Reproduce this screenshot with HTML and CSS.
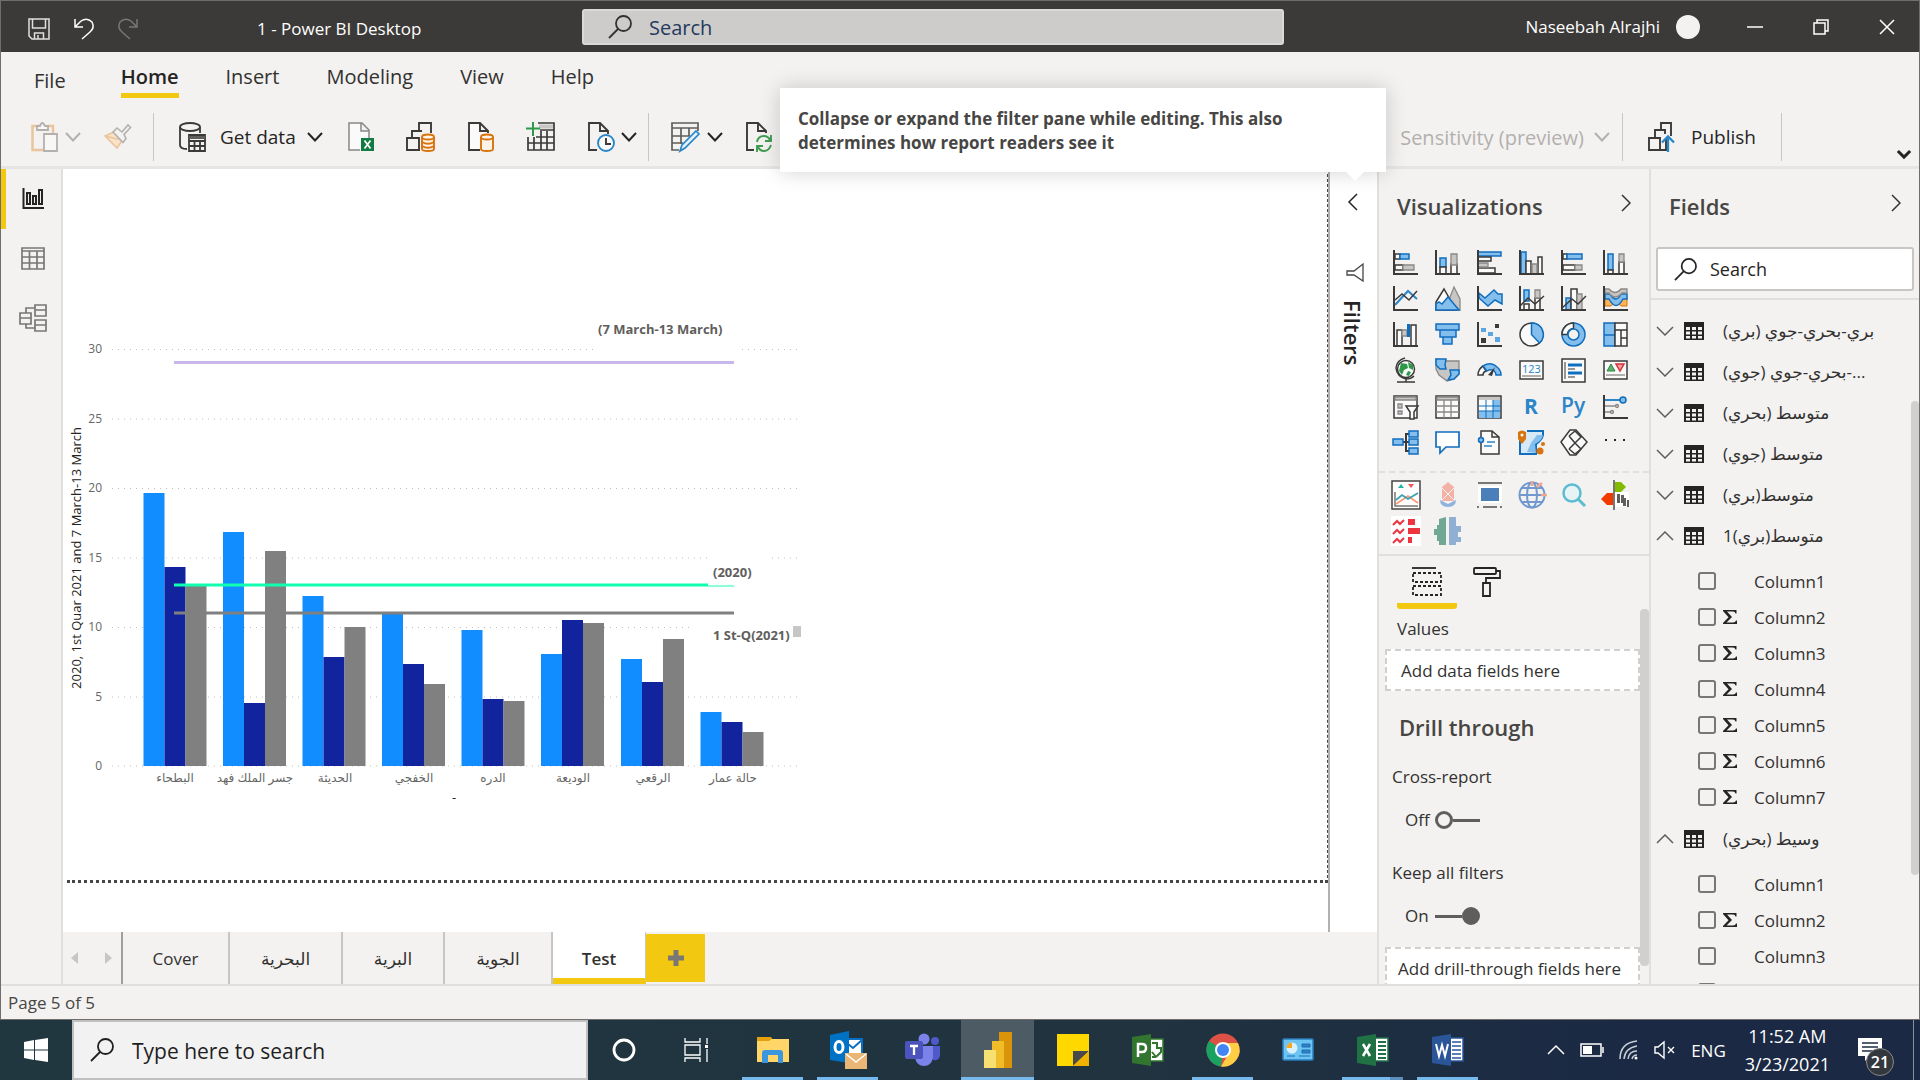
FILE: index.html
```
<!DOCTYPE html>
<html lang="en">
<head>
<meta charset="utf-8">
<title>1 - Power BI Desktop</title>
<link rel="stylesheet" href="styles.css">
</head>
<body>
<svg class="defs" aria-hidden="true">
  <symbol id="down" viewBox="0 0 16 10"><path d="M1 1l7 7.500 7-7.500" fill="none" stroke="currentColor" stroke-width="2"/></symbol>
  <symbol id="right" viewBox="0 0 10 18"><path d="M1 1l8 8-8 8" fill="none" stroke="currentColor" stroke-width="1.500"/></symbol>
  <symbol id="caret" viewBox="0 0 18 10"><path d="M1 1l8 8 8-8" fill="none" stroke="currentColor" stroke-width="1.500"/></symbol>
  <symbol id="lens" viewBox="0 0 24 24"><circle cx="15.500" cy="8.500" r="7.500" fill="none" stroke="currentColor" stroke-width="1.800"/><path d="M10 14L1 23" stroke="currentColor" stroke-width="1.800"/></symbol>
  <symbol id="table" viewBox="0 0 20 18"><path d="M0 0h20v18H0z" fill="#252423"/><path d="M2 5h4v3H2zM8 5h4v3H8zM14 5h4v3h-4zM2 9.500h4v3H2zM8 9.500h4v3H8zM14 9.500h4v3h-4zM2 14h4v2.500H2zM8 14h4v2.500H8zM14 14h4v2.500h-4z" fill="#f3f2f1"/></symbol>
  <symbol id="sigma" viewBox="0 0 14 14"><path d="M0 0h13.500v3.500h-1Q12 1.500 10 1.500H4L9 7l-5.500 5.500H10q2.500 0 3-2h1V14H0v-1l5.500-5.700L0 1z" fill="#252423"/></symbol>
</svg>

<div class="window">
  <header class="titlebar">
    <div class="titlebar-left">
      <button class="plain" aria-label="Save"><svg width="22" height="22" viewBox="0 0 22 22" fill="none" stroke="#e1dfdd" stroke-width="1.500"><path d="M1 1h20v20H4l-3-3zM4.500 1v9h13V1M6.500 21v-6h9v6M10 21v-4"/></svg></button>
      <button class="plain" aria-label="Undo"><svg width="20" height="22" viewBox="0 0 20 22" fill="none" stroke="#fff" stroke-width="1.500"><path d="M1 1v8h8M1 9L7 3q6-4 11 1 3 6-2 10l-8 7"/></svg></button>
      <button class="plain" aria-label="Redo"><svg width="20" height="22" viewBox="0 0 20 22" fill="none" stroke="#797775" stroke-width="1.500"><path d="M19 1v8h-8M19 9L13 3Q7-1 2 4q-3 6 2 10l8 7"/></svg></button>
      <span class="doc-title">1 - Power BI Desktop</span>
    </div>
    <label class="title-search"><svg width="24" height="24"><use href="#lens"/></svg><input type="text" placeholder="Search" aria-label="Search"></label>
    <div class="titlebar-right">
      <span>Naseebah Alrajhi</span><span class="avatar"></span>
      <button class="plain" aria-label="Minimize"><svg width="16" height="16"><path d="M0 8h16" stroke="#fff" stroke-width="1.500"/></svg></button>
      <button class="plain" aria-label="Restore"><svg width="16" height="16" fill="none" stroke="#fff" stroke-width="1.500"><path d="M1 4h11v11H1zM4 4V1h11v11h-3"/></svg></button>
      <button class="plain" aria-label="Close"><svg width="16" height="16" stroke="#fff" stroke-width="1.500"><path d="M1 1l14 14M15 1L1 15"/></svg></button>
    </div>
  </header>

  <nav class="tabs">
    <button class="tab-file">File</button>
    <button class="tab active">Home</button>
    <button class="tab">Insert</button>
    <button class="tab">Modeling</button>
    <button class="tab">View</button>
    <button class="tab">Help</button>
  </nav>

  <div class="ribbon">
    <button class="tool muted" aria-label="Paste"><svg width="28" height="30" viewBox="0 0 28 30" fill="none" stroke-width="1.800"><path d="M8 4H1.500v24H12M17 4h5v8" stroke="#eac49c" stroke-width="2.500"/><path d="M6 8V4h3q2-6 5 0h3v4zM13 12h13v17H13z" stroke="#b3b0ad" fill="#f8f7f6"/></svg><svg class="chev" width="16" height="10"><use href="#down"/></svg></button>
    <button class="tool brush" aria-label="Format painter"><svg width="28" height="26" viewBox="0 0 28 26" stroke-width="1.600"><path d="M1 12l12 12 7-10-8-7z" fill="#fbe3c8" stroke="#eac49c"/><path d="M1 12l12 3 7 1" fill="none" stroke="#eac49c"/><path d="M9 8l4-4 5 4 6-7 2.500 2.500-6.500 7 2 4-3 4z" fill="#f3f2f1" stroke="#b3b0ad"/></svg></button>
    <span class="sep"></span>
    <button class="tool getdata"><svg width="27" height="30" viewBox="0 0 27 30" fill="none" stroke="#3b3a39" stroke-width="1.800"><ellipse cx="11" cy="5" rx="10" ry="4"/><path d="M1 5v18q0 4 7 4M21 5v6"/><path d="M10 13h16v16H10zM10 19h16M10 24h16M15.500 19v10M21 19v10"/><path d="M10 15.500h16" stroke-width="3" stroke="#605e5c"/></svg><span>Get data</span><svg class="chev" width="16" height="10"><use href="#down"/></svg></button>
    <button class="tool icon" aria-label="Excel"><svg width="28" height="30" viewBox="0 0 28 30"><path d="M13 28H2V1h13l7 7v10M14 1v8h8" fill="#fafafa" stroke="#8a8886" stroke-width="1.500"/><path d="M14 16h13v13H14z" fill="#107c41"/><path d="M17.500 18.500l6 8M23.500 18.500l-6 8" stroke="#fff" stroke-width="1.800"/></svg></button>
    <button class="tool icon" aria-label="Datasets"><svg width="30" height="30" viewBox="0 0 30 30" fill="none" stroke="#3b3a39" stroke-width="1.900"><path d="M14 28H1V16h12v12M6 16V9h10M13 9V1h12v10"/><g stroke="#d9730d" fill="#fdf3e8"><path d="M16 15v12q0 2 6 2t6-2V15"/><ellipse cx="22" cy="15" rx="6" ry="2.500"/><path d="M16 20q6 3.500 12 0M16 24q6 3.500 12 0" fill="none"/></g></svg></button>
    <button class="tool icon" aria-label="SQL Server"><svg width="28" height="30" viewBox="0 0 28 30" stroke-width="1.900"><path d="M13 28H2V1h11l8 8v2M13 1v8h8" fill="#fafafa" stroke="#3b3a39"/><g fill="#fdf3e8" stroke="#d9730d"><path d="M14 15v12q0 2 6 2t6-2V15"/><ellipse cx="20" cy="15" rx="6" ry="2.500"/></g></svg></button>
    <button class="tool icon" aria-label="Enter data"><svg width="29" height="30" viewBox="0 0 29 30" fill="none" stroke="#3b3a39" stroke-width="1.700"><path d="M2 15v13h26V1H12M2 21h26M8 15v13M15 9v19M21 9v19M14 8h14M10 15h18"/><path d="M13 4.500h14" stroke="#c8c6c4" stroke-width="4"/><path d="M7 0v14M0 6.500h14" stroke="#2e9949" stroke-width="2"/></svg></button>
    <button class="tool recent" aria-label="Recent sources"><svg width="28" height="30" viewBox="0 0 28 30" fill="none" stroke-width="1.900"><path d="M10 28H2V1h11l8 8v3M13 1v8h8" stroke="#3b3a39"/><circle cx="19" cy="21" r="8" stroke="#2a86c8" fill="#fafafa"/><path d="M19 16v6h5" stroke="#3b3a39"/></svg><svg class="chev" width="16" height="10"><use href="#down"/></svg></button>
    <span class="sep"></span>
    <button class="tool transform" aria-label="Transform data"><svg width="30" height="30" viewBox="0 0 30 30" fill="none" stroke="#605e5c" stroke-width="1.700"><path d="M1 1h26v5H1zM1 6v22h7M1 14h18M1 21h11M10 6v16M18 6v8M27 6v3"/><path d="M11 23L25 9l3 3-14 14-5 3z" fill="#e5f1fa" stroke="#2a86c8"/></svg><svg class="chev" width="16" height="10"><use href="#down"/></svg></button>
    <button class="tool refresh" aria-label="Refresh"><svg width="28" height="30" viewBox="0 0 28 30" fill="none" stroke-width="1.900"><path d="M9 28H2V1h11l8 8v2M13 1v8h8" stroke="#3b3a39"/><g stroke="#3f9c50"><path d="M12 20q1-6 7-6 4 0 6 4M26 13v6h-6M26 23q-2 6-7 6-4 0-6-4M12 30v-6h6"/></g></svg></button>
    <span class="spacer"></span>
    <button class="tool muted sensitivity"><span>Sensitivity (preview)</span><svg class="chev" width="16" height="10"><use href="#down"/></svg></button>
    <span class="sep"></span>
    <button class="tool publish"><svg width="28" height="30" viewBox="0 0 28 30" fill="none" stroke="#3b3a39" stroke-width="1.900"><path d="M1 16h11v12H1zM7 15V8h10v4M13 8V1h10v13M12 28h6V16"/><path d="M20 30V15M14 20.500l6-6 6 6" stroke="#2a86c8" stroke-width="2.300"/></svg><span>Publish</span></button>
    <span class="sep"></span>
    <button class="plain collapse" aria-label="Collapse ribbon"><svg width="14" height="9" viewBox="0 0 16 10"><path d="M1 1l7 7 7-7" fill="none" stroke="#252423" stroke-width="3.500"/></svg></button>
  </div>

  <main class="workspace">
    <nav class="rail">
      <button class="plain on" aria-label="Report"><svg width="22" height="22" viewBox="0 0 22 22" fill="none" stroke="#252423" stroke-width="2"><path d="M1.500 0v20H22M5 5h3v11H5zM11 8h3v8h-3zM17 2h3v14h-3z"/></svg></button>
      <button class="plain" aria-label="Data"><svg width="24" height="24" viewBox="0 0 24 24" fill="none" stroke="#797775" stroke-width="1.700"><path d="M1 1h22v21H1zM1 4h22M1 10h22M1 16h22M8.500 4v18M16 4v18"/></svg></button>
      <button class="plain" aria-label="Model"><svg width="28" height="28" viewBox="0 0 28 28" fill="none" stroke="#797775" stroke-width="1.700"><path d="M1 9h11v11H1zM1 14h11M16 1h11v11H16zM16 6h11M16 16h11v11H16zM16 21h11M7 9V4h9M7 20v4h9"/></svg></button>
    </nav>

    <section class="report">
      <div class="canvas">
        <div class="page">
          <svg class="chart" width="780" height="640" viewBox="67 169 780 640" role="img" aria-label="Clustered column chart">
            <g class="grid"><path d="M112 349.500H797M112 419H797M112 488.500H797M112 558H797M112 627.500H692M112 697H797M112 766H797"/></g>
            <g class="tick" text-anchor="end"><text x="102" y="353">30</text><text x="102" y="423">25</text><text x="102" y="492">20</text><text x="102" y="562">15</text><text x="102" y="631">10</text><text x="102" y="701">5</text><text x="102" y="770">0</text></g>
            <g fill="#118dff"><path d="M143.500 493h21v273h-21zM223 532h21v234h-21zM302.500 596h21v170h-21zM382 613h21v153h-21zM461.500 630h21v136h-21zM541 654h21v112h-21zM621 659h21v107h-21zM700.500 712h21v54h-21z"/></g>
            <g fill="#12239e"><path d="M164.500 567h21v199h-21zM244 703h21v63h-21zM323.500 657h21v109h-21zM403 664h21v102h-21zM482.500 699h21v67h-21zM562 620h21v146h-21zM642 682h21v84h-21zM721.500 722h21v44h-21z"/></g>
            <g fill="#808080"><path d="M185.500 586h21v180h-21zM265 551h21v215h-21zM344.500 627h21v139h-21zM424 684h21v82h-21zM503.500 701h21v65h-21zM583 623h21v143h-21zM663 639h21v127h-21zM742.500 732h21v34h-21z"/></g>
            <path d="M174 362.500H734" stroke="#c8b7ea" stroke-width="3"/>
            <path d="M174 585H734" stroke="#10ffb0" stroke-width="3"/>
            <path d="M174 613H734" stroke="#808080" stroke-width="3"/>
            <path d="M596 310h144v42H596zM708 556h64v29.500h-64z" fill="#fff"/>
            <g class="note"><text x="598" y="334">(7 March-13 March)</text><text x="713" y="577">(2020)</text><text x="713" y="640">1 St-Q(2021)</text></g>
            <path d="M793 626h8v11h-8z" fill="#c8c6c4"/>
            <g class="cat" text-anchor="middle" direction="rtl"><text x="175" y="782">البطحاء</text><text x="255" y="782">جسر الملك فهد</text><text x="335" y="782">الحديثة</text><text x="414" y="782">الخفجي</text><text x="493" y="782">الدره</text><text x="573" y="782">الوديعة</text><text x="653" y="782">الرقعي</text><text x="733" y="782">حالة عمار</text></g>
            <text class="axis" text-anchor="middle" transform="translate(81 558) rotate(-90)">2020, 1st Quar 2021 and 7 March-13 March</text>
            <text class="axis" x="452" y="802">-</text>
          </svg>
        </div>
      </div>
      <aside class="filters">
        <button class="plain" aria-label="Expand filters"><svg width="10" height="18" viewBox="0 0 10 18"><path d="M9 1L1 9l8 8" fill="none" stroke="#252423" stroke-width="1.500"/></svg></button>
        <svg class="funnel" width="18" height="20" viewBox="0 0 18 20"><path d="M17 1v17L8 12H1V8h7z" fill="none" stroke="#484644" stroke-width="1.300"/></svg>
        <h2>Filters</h2>
      </aside>
      <nav class="pages">
        <div class="pager"><button class="plain" aria-label="Previous page"><svg width="7" height="12"><path d="M7 0v12L0 6z" fill="#c8c6c4"/></svg></button><button class="plain" aria-label="Next page"><svg width="7" height="12"><path d="M0 0v12l7-6z" fill="#c8c6c4"/></svg></button></div>
        <button class="pg cover">Cover</button>
        <button class="pg wide" dir="rtl">البحرية</button>
        <button class="pg narrow" dir="rtl">البرية</button>
        <button class="pg mid" dir="rtl">الجوية</button>
        <button class="pg current">Test</button>
        <button class="add" aria-label="New page"><svg width="18" height="18"><path d="M9 1v16M1 9h16" stroke="#797775" stroke-width="5"/></svg></button>
      </nav>
    </section>

    <aside class="pane viz">
      <header><h2>Visualizations</h2><button class="plain" aria-label="Collapse"><svg width="10" height="18"><use href="#right"/></svg></button></header>
      <div class="gallery">
        <button aria-label="Stacked bar"><svg viewBox="0 0 25 25"><path class="w" d="M2 4h5v5H2z"/><path class="b" d="M7 4h9v5H7z"/><path class="w" d="M2 15h8v5H2z"/><path class="g" d="M10 15h11v5H10z"/><path class="k" d="M1 0v24h24"/></svg></button>
        <button aria-label="Stacked column"><svg viewBox="0 0 25 25"><path class="b" d="M5 8h6v9H5z"/><path class="w" d="M5 17h6v7H5zM16 14h6v10h-6z"/><path class="g" d="M16 4h6v11h-6z"/><path class="k" d="M1 0v24h24"/></svg></button>
        <button aria-label="Clustered bar"><svg viewBox="0 0 25 25"><path class="b" d="M1 2h23v4H1z"/><path class="w" d="M1 7h13v4H1zM1 18h17v5H1z"/><path class="g" d="M1 13h10v4H1z"/><path class="k" d="M1 0v24h24"/></svg></button>
        <button aria-label="Clustered column"><svg viewBox="0 0 25 25"><path class="b" d="M2 2h5v22H2z"/><path class="w" d="M7 11h5v13H7zM19 7h4v17h-4z"/><path class="g" d="M13 14h5v10h-5z"/><path class="k" d="M1 0v24h24"/></svg></button>
        <button aria-label="100% stacked bar"><svg viewBox="0 0 25 25"><path class="w" d="M2 4h4v5H2zM2 15h12v5H2z"/><path class="b" d="M6 4h15v5H6z"/><path class="g" d="M14 15h7v5h-7z"/><path class="k" d="M1 0v24h24"/></svg></button>
        <button aria-label="100% stacked column"><svg viewBox="0 0 25 25"><path class="b" d="M5 4h5v16H5z"/><path class="w" d="M5 20h5v4H5zM16 12h5v12h-5z"/><path class="g" d="M16 4h5v8h-5z"/><path class="k" d="M1 0v24h24"/></svg></button>
        <button aria-label="Line"><svg viewBox="0 0 25 25"><path class="bl" d="M2 19L15 5l9 8"/><path class="k thin" d="M2 14l7-6 7 6 8-9"/><path class="k" d="M1 0v24h24"/></svg></button>
        <button aria-label="Area"><svg viewBox="0 0 25 25"><path class="g" d="M10 24L19 1l6 12v11z"/><path class="w" d="M1 16L9 3l12 21H1z"/><path class="b" d="M1 18l3-2 3 2 6-7 11 13H1z"/></svg></button>
        <button aria-label="Stacked area"><svg viewBox="0 0 25 25"><path class="b" d="M2 7l6 5 9-8 4 4h4v10l-7-4-7 6-9-8z"/><path class="k" d="M1 0v24h24"/></svg></button>
        <button aria-label="Line and stacked column"><svg viewBox="0 0 25 25"><path class="b" d="M5 4h5v11H5z"/><path class="w" d="M5 18h5v6H5zM16 12h5v12h-5z"/><path class="g" d="M16 4h5v8h-5z"/><path class="k" d="M1 0v24h24"/><path class="k thin" d="M1 20l8-8 7 6 9-8"/></svg></button>
        <button aria-label="Line and clustered column"><svg viewBox="0 0 25 25"><path class="b" d="M5 12h5v12H5z"/><path class="w" d="M10 3h6v21h-6z"/><path class="g" d="M16 8h5v16h-5z"/><path class="k" d="M1 0v24h24"/><path class="k thin" d="M1 22l10-9 6 5 8-8"/></svg></button>
        <button aria-label="Ribbon"><svg viewBox="0 0 25 25"><path d="M2 11h6q4 8 10 0h6v9h-6q-5-6-10 0H2z" fill="#ffb457" stroke="#d9730d"/><path class="b" d="M2 8h5q6 10 11 0h6v5h-4q-7 13-14 0H2z"/><path class="g" d="M2 3h4q6 7 12 0h6v4h-5q-7 8-13 0H2z"/><path class="k" d="M1 0v24h24"/></svg></button>
        <button aria-label="Waterfall"><svg viewBox="0 0 25 25"><path class="w" d="M4 8h5v16H4zM18 3h5v21h-5z"/><path class="g" d="M9 8h5v6H9z"/><path fill="#106ebe" d="M14 2h3v13h-3z"/><path class="k" d="M1 0v24h24"/></svg></button>
        <button aria-label="Funnel"><svg viewBox="0 0 25 25"><path class="b" d="M1 2h23v6H1zM5 8h16v7H5zM8 15h9v7H8z"/></svg></button>
        <button aria-label="Scatter"><svg viewBox="0 0 25 25"><path class="k" d="M1 0v24h24"/><path d="M18 2h4v4h-4zM4 16h5v5H4z" fill="#3b3a39"/><path d="M4 6h5v4H4zM11 10h5v4h-5zM18 15h5v5h-5z" fill="#5ba6e0"/></svg></button>
        <button aria-label="Pie"><svg viewBox="0 0 25 25"><circle class="w" cx="12.500" cy="12.500" r="11.500"/><path class="b" d="M12.500 12.500V1a11.500 11.500 0 0 1 8 20z"/></svg></button>
        <button aria-label="Donut"><svg viewBox="0 0 25 25"><circle class="b" cx="12.500" cy="12.500" r="11.500"/><path class="w" d="M1 12.500A11.500 11.500 0 0 1 12.500 1v5.500a6 6 0 0 0-6 6z"/><circle cx="12.500" cy="12.500" r="5.500" fill="#f3f2f1" stroke="#106ebe" stroke-width="1.500"/></svg></button>
        <button aria-label="Treemap"><svg viewBox="0 0 25 25"><path class="b" d="M1 1h11v12H1zM1 13h11v11H1z"/><path class="w" d="M12 1h12v7H12zM12 8h6v16h-6zM18 8h6v8h-6zM18 16h6v8h-6z"/></svg></button>
        <button aria-label="Map"><svg viewBox="0 0 25 25"><circle class="w" cx="13" cy="11" r="8.500"/><path d="M8 5l6 1 1 4-4 2-2 5-3-4zM15 4l5 3v5l-4-2zM15 13l3 1-2 4-3-1z" fill="#2e9949"/><path class="k thin" d="M12 0Q4 2 3 10q1 9 10 11 5 0 8-3M13 20v4M4 24h18"/></svg></button>
        <button aria-label="Filled map"><svg viewBox="0 0 25 25"><path class="g" d="M1 1l10 2h13v13l-5 5-7 2-8-6-3-6z"/><path class="b" d="M1 1h10l-1 6 1 4H5L1 7zM15 12h9v4l-5 5-6 1 3-5z"/></svg></button>
        <button aria-label="Gauge"><svg viewBox="0 0 25 25"><path class="w" d="M1 17a11.500 11 0 0 1 5-9l3 5q-3 1-3 4z"/><path class="b" d="M6 8q8-5 14 1 4 3 4 8h-5q0-3-3-5-3-1-6 1z"/><path d="M11 17l7-8-3 9z" fill="#3b3a39"/></svg></button>
        <button aria-label="Card"><svg viewBox="0 0 25 25"><path class="w" d="M1 3h23v18H1z"/><path class="g" d="M3 18h19"/><text x="3" y="15" font-size="11" fill="#1f83c6">123</text></svg></button>
        <button aria-label="Multi-row card"><svg viewBox="0 0 25 25"><path class="w" d="M1 1h23v23H1z"/><path d="M7 7h14M7 15h14" stroke="#106ebe" stroke-width="3"/><path d="M4 4v17M7 11h7M7 19h7" stroke="#797775" stroke-width="1.500"/></svg></button>
        <button aria-label="KPI"><svg viewBox="0 0 25 25"><path class="w" d="M1 3h23v18H1z"/><path d="M4 13l4-7 4 7z" fill="#5cb270" stroke="#2e8540"/><path d="M13 6h8l-4 7z" fill="#f7a0a0" stroke="#d13438" stroke-width="1.500"/><path class="g" d="M3 17h19"/></svg></button>
        <button aria-label="Slicer"><svg viewBox="0 0 25 25"><path class="w" d="M1 2h23v22H1z"/><path class="g" d="M2 3h21v3H2zM5 10h4v4H5zM5 17h4v3H5z"/><path class="w" d="M13 12h12l-4 6v7h-4v-7z"/></svg></button>
        <button aria-label="Table"><svg viewBox="0 0 25 25"><path class="w" d="M1 2h23v22H1z"/><path class="g" d="M2 3h21v3H2zM1 12h23M1 18h23M9 6v18M16 6v18"/></svg></button>
        <button aria-label="Matrix"><svg viewBox="0 0 25 25"><path class="w" d="M1 2h23v22H1z"/><path d="M2 3h21v3H2z" fill="#c8c6c4"/><path d="M16 6h7v18h-7zM2 17h14v7H2z" fill="#83beec"/><path d="M1 12h23M1 17h23M9 6v18M16 6v18" stroke="#106ebe" fill="none"/></svg></button>
        <button aria-label="R script"><svg viewBox="0 0 25 25"><text x="5" y="20" font-size="21" font-weight="700" fill="#2a86c8">R</text></svg></button>
        <button aria-label="Python"><svg viewBox="0 0 25 25"><text x="0" y="19" font-size="21" font-weight="600" fill="#2a86c8">Py</text></svg></button>
        <button aria-label="Key influencers"><svg viewBox="0 0 25 25"><path class="bl" d="M1 6h16"/><circle class="b" cx="20" cy="6" r="3"/><path class="g" d="M1 12h11M1 18h7"/><circle class="g" cx="14" cy="12" r="1.500"/><circle class="g" cx="9" cy="18" r="1.500"/><path class="k" d="M1 1v23h24"/></svg></button>
        <button aria-label="Decomposition tree"><svg viewBox="0 0 25 25"><path class="k" d="M9 12h7M19 4h-6v17h6"/><path class="b" d="M0 9h10v6H0zM16 1h9v6h-9zM16 9h9v6h-9zM16 18h9v6h-9z"/></svg></button>
        <button aria-label="Q&amp;A"><svg viewBox="0 0 25 25"><path d="M1 2h23v15H11l-6 6v-6H1z" fill="#fff" stroke="#106ebe" stroke-width="1.700"/></svg></button>
        <button aria-label="Smart narrative"><svg viewBox="0 0 25 25"><path class="w" d="M4 1h11l7 6v17H4zM15 1v6h7"/><circle class="b" cx="4" cy="10" r="2.500"/><path d="M10 12h8M7 16h8" stroke="#2a86c8" stroke-width="1.500"/></svg></button>
        <button aria-label="ArcGIS map"><svg viewBox="0 0 25 25"><path d="M1 10v14h16V14q6-4 7-9V1H8" fill="#d7e9f7" stroke="#106ebe" stroke-width="2"/><path d="M8 22l4-9 6-8h6q-1 6-8 9l1 9z" fill="#83beec"/><path d="M-1 2q4-3 8 0v7l-4 5-4-5z" fill="#d9730d"/><circle cx="3" cy="5" r="1.500" fill="#fff"/><circle cx="21" cy="21" r="3.500" fill="#d9730d"/><circle cx="24" cy="14" r="2" fill="#d9730d"/></svg></button>
        <button aria-label="Power Apps"><svg viewBox="0 0 25 25"><path class="w" d="M0 12L9 0h6l11 12-11 13H9z"/><path class="w" d="M8 6l6 7-6 6M14 13l6-6M14 13l6 6M14 1l-6 5M14 24l-6-5M14 1l6 6-6 6M20 19l-6 5"/></svg></button>
        <button aria-label="More"><svg viewBox="0 0 25 25"><path d="M2 9h2v2H2zM11 9h2v2h-2zM20 9h2v2h-2z" fill="#252423"/></svg></button>
      </div>
      <div class="gallery custom">
        <button aria-label="Trend visual"><svg viewBox="0 0 30 30"><path d="M1 1h28v28H1z" fill="#fff" stroke="#484644" stroke-width="1.500"/><path d="M7 8l3-4 3 4z" fill="#26b5a6"/><path d="M17 4h6l-3 4z" fill="#f2545b"/><path d="M4 12v14h23" fill="none" stroke="#797775" stroke-width="1.500"/><path d="M5 24l12-8 10 7" fill="none" stroke="#fb9a73" stroke-width="1.800"/><path d="M5 20l6-5 6 4 10-6" fill="none" stroke="#39a0b5" stroke-width="1.800"/></svg></button>
        <button aria-label="Infographic visual"><svg viewBox="0 0 30 30"><path d="M15 2l6 5v14H9V7z" fill="#f3b2a5"/><path d="M9 8l12 12M21 8L9 20" stroke="#f3f2f1"/><path d="M7 20l8 4 8-4q0 7-8 7t-8-7z" fill="#8fb3dc"/></svg></button>
        <button aria-label="Box visual"><svg viewBox="0 0 30 30"><path d="M3 6h24v17H3z" fill="#fff"/><path d="M6 8h18v13H6z" fill="#4a7fb9"/><path d="M3 3h24M8 27h14M2 27h2M25 27h2" stroke="#797775" stroke-width="2"/></svg></button>
        <button aria-label="Globe visual"><svg viewBox="0 0 30 30"><g fill="none" stroke="#7198cf" stroke-width="2"><circle cx="15" cy="15" r="12.500"/><ellipse cx="15" cy="15" rx="5" ry="12.500"/><path d="M2 15h26M5 8h20M5 22h20"/></g><path d="M15 1v5M20 7l5-4M24 15h6" stroke="#f4a58a" stroke-width="2.500"/></svg></button>
        <button aria-label="Search visual"><svg viewBox="0 0 30 30"><circle cx="13" cy="13" r="8.500" fill="#e8f3f5" stroke="#5bbcd2" stroke-width="2.500"/><path d="M19 19l7 7" stroke="#5bbcd2" stroke-width="3"/></svg></button>
        <button aria-label="Sign visual"><svg viewBox="0 0 30 30"><path d="M13 0v30" stroke="#797775" stroke-width="2"/><path d="M14 2h6l5 5-5 5h-6z" fill="#80ba01"/><path d="M12 13H6l-6 6 6 6h6z" fill="#f03a00"/><path d="M14 12h14v15H14z" fill="#fff"/><path d="M16 14h3v9h-3zM20 15h3v8h-3zM22 18h3v8h-3zM26 20h2v7h-2z" fill="#605e5c"/></svg></button>
        <button aria-label="Sparkline visual"><svg viewBox="0 0 30 30"><path d="M0 0h30v30H0z" fill="#fff"/><path d="M17 3h7v6h-7zM17 12h12v6H17zM17 21h4v6h-4z" fill="#ed3540"/><path d="M2 9l4-4 3 3 4-4M2 18l4-4 3 3 4-4M2 27l4-4 3 3 4-4" fill="none" stroke="#ed3540" stroke-width="2"/></svg></button>
        <button aria-label="Tornado visual"><svg viewBox="0 0 30 30"><path d="M13 1v28H6v-4H4v-6H1v-6h3V9h2V3z" fill="#71a894"/><path d="M16 1h7v9h5v6h-3v5h3v5h-5v3h-7z" fill="#8fb0d3"/></svg></button>
      </div>
      <div class="well-tabs">
        <button class="plain on" aria-label="Fields"><svg width="30" height="30" viewBox="0 0 30 30" fill="none" stroke="#252423" stroke-width="1.800"><path d="M0 1h24"/><path d="M1 6h28v9H1zM1 19h28v9H1z" stroke-dasharray="3 2"/></svg></button>
        <button class="plain" aria-label="Format"><svg width="28" height="30" viewBox="0 0 28 30" fill="none" stroke="#252423" stroke-width="1.800"><rect x="1" y="1" width="22" height="6" rx="1"/><path d="M23 4h4v7H13v5M10 16h7v13h-7z"/></svg></button>
      </div>
      <div class="wells">
        <div class="well-body">
          <p class="values">Values</p>
          <div class="drop">Add data fields here</div>
          <h3>Drill through</h3>
          <label for="cross">Cross-report</label>
          <div class="switch-row"><span>Off</span><input class="switch" type="checkbox" id="cross"></div>
          <label for="keep">Keep all filters</label>
          <div class="switch-row"><span>On</span><input class="switch" type="checkbox" id="keep" checked></div>
          <div class="drop last">Add drill-through fields here</div>
        </div>
        <span class="bar"></span>
      </div>
    </aside>

    <aside class="pane fields">
      <header><h2>Fields</h2><button class="plain" aria-label="Collapse"><svg width="10" height="18"><use href="#right"/></svg></button></header>
      <label class="field-search"><svg width="23" height="23"><use href="#lens"/></svg><input type="text" placeholder="Search" aria-label="Search fields"></label>
      <div class="tree">
        <div class="tree-body">
          <button class="entity"><svg class="tw" width="18" height="10"><use href="#caret"/></svg><svg width="20" height="18"><use href="#table"/></svg><span dir="rtl">بري-بحري-جوي (بري)</span></button>
          <button class="entity"><svg class="tw" width="18" height="10"><use href="#caret"/></svg><svg width="20" height="18"><use href="#table"/></svg><span dir="rtl">...-بحري-جوي (جوي)</span></button>
          <button class="entity"><svg class="tw" width="18" height="10"><use href="#caret"/></svg><svg width="20" height="18"><use href="#table"/></svg><span dir="rtl">متوسط (بحري)</span></button>
          <button class="entity"><svg class="tw" width="18" height="10"><use href="#caret"/></svg><svg width="20" height="18"><use href="#table"/></svg><span dir="rtl">متوسط (جوي)</span></button>
          <button class="entity"><svg class="tw" width="18" height="10"><use href="#caret"/></svg><svg width="20" height="18"><use href="#table"/></svg><span dir="rtl">متوسط(بري)</span></button>
          <button class="entity open"><svg class="tw" width="18" height="10"><use href="#caret"/></svg><svg width="20" height="18"><use href="#table"/></svg><span dir="rtl">متوسط(بري)1</span></button>
          <div class="cols">
            <label><input type="checkbox"><i></i>Column1</label>
            <label><input type="checkbox"><i><svg width="14" height="14"><use href="#sigma"/></svg></i>Column2</label>
            <label><input type="checkbox"><i><svg width="14" height="14"><use href="#sigma"/></svg></i>Column3</label>
            <label><input type="checkbox"><i><svg width="14" height="14"><use href="#sigma"/></svg></i>Column4</label>
            <label><input type="checkbox"><i><svg width="14" height="14"><use href="#sigma"/></svg></i>Column5</label>
            <label><input type="checkbox"><i><svg width="14" height="14"><use href="#sigma"/></svg></i>Column6</label>
            <label><input type="checkbox"><i><svg width="14" height="14"><use href="#sigma"/></svg></i>Column7</label>
          </div>
          <button class="entity open"><svg class="tw" width="18" height="10"><use href="#caret"/></svg><svg width="20" height="18"><use href="#table"/></svg><span dir="rtl">وسيط (بحري)</span></button>
          <div class="cols">
            <label><input type="checkbox"><i></i>Column1</label>
            <label><input type="checkbox"><i><svg width="14" height="14"><use href="#sigma"/></svg></i>Column2</label>
            <label><input type="checkbox"><i></i>Column3</label>
            <label><input type="checkbox" aria-label="Next column"><i></i></label>
          </div>
        </div>
        <span class="bar"></span>
      </div>
    </aside>
  </main>

  <footer class="status">Page 5 of 5</footer>
  <div class="tooltip" role="tooltip">Collapse or expand the filter pane while editing. This also determines how report readers see it</div>
</div>

<footer class="taskbar">
  <button class="start" aria-label="Start"><svg width="24" height="24"><path d="M0 4l10-2v9.500H0zM11 2l13-2v11.500H11zM0 12.500h10V22L0 20zM11 12.500h13V24l-13-2z" fill="#fff"/></svg></button>
  <label class="win-search"><svg width="24" height="24"><use href="#lens"/></svg><input type="text" placeholder="Type here to search" aria-label="Type here to search"></label>
  <div class="sys">
    <button class="plain" aria-label="Cortana"><svg width="24" height="24"><circle cx="12" cy="12" r="10" fill="none" stroke="#fff" stroke-width="2.800"/></svg></button>
    <button class="plain" aria-label="Task view"><svg width="24" height="24" fill="none" stroke="#fff" stroke-width="1.300"><path d="M1 0v4h15V0M1 7h15v10H1zM1 24v-4h15v4M23 0v6M23 11v13"/><path d="M21 7h3v3h-3z" fill="#fff" stroke="none"/></svg></button>
  </div>
  <div class="apps">
    <button class="run" aria-label="File Explorer"><svg width="32" height="28"><path d="M0 1h14l2 3h-2v2H0z" fill="#e5a00d"/><path d="M0 5h12l3-2h17v23H0z" fill="#ffd667"/><path d="M5 27V17q0-3 3-3h15q3 0 3 3v10h-5v-8H11v8z" fill="#3a96dd"/></svg></button>
    <button class="run" aria-label="Outlook"><svg width="38" height="38"><path d="M16 9h17v15H16z" fill="#fff"/><path d="M16 8h17v15H16z" fill="none" stroke="#0a6fc2" stroke-width="2"/><path d="M19 13l5 4 9-8" fill="none" stroke="#0a6fc2" stroke-width="2"/><path d="M1 4l19-4v32L1 29z" fill="#0072c6"/><ellipse cx="10" cy="16" rx="4" ry="5.500" fill="none" stroke="#fff" stroke-width="3"/><path d="M16 22h22v16H16z" fill="#eab676"/><path d="M17 23l10 8 10-8" fill="none" stroke="#fff" stroke-width="1.500"/></svg></button>
    <button aria-label="Teams"><svg width="36" height="34"><circle cx="19" cy="6" r="5.500" fill="#7b83eb"/><circle cx="30" cy="8" r="4" fill="#5059c9"/><path d="M24 13h11v10q-1 5-7 4z" fill="#5059c9"/><path d="M10 13h18v12q-2 8-9 8t-9-8z" fill="#7b83eb"/><rect y="8" width="18" height="18" rx="2" fill="#4b53bc"/><path d="M5 13h8M9 13v9" stroke="#fff" stroke-width="2.300"/></svg></button>
    <button class="run focus" aria-label="Power BI Desktop"><svg width="28" height="36"><path d="M15 0h13v36H15z" fill="#d99409"/><path d="M8 9h12v27H8z" fill="#f0bd28"/><path d="M0 18h12v18H0z" fill="#f7df72"/></svg></button>
    <button aria-label="Sticky Notes"><svg width="32" height="32"><path d="M0 0h32v32H0z" fill="#ffd800"/><path d="M16 32V17h16z" fill="#4a4a4a"/><path d="M16 32l16-15v15z" fill="#f0b400"/></svg></button>
    <button aria-label="Project"><svg width="32" height="32"><path d="M16 5h15v22H16z" fill="#fff" stroke="#31752f" stroke-width="1.500"/><path d="M20 9h5v5h4v4l-5 5M20 18l4 5M24 23h-4" fill="none" stroke="#31752f" stroke-width="2"/><path d="M0 3l19-3v32L0 29z" fill="#31752f"/><path d="M6 23V10h4q4 0 4 4t-4 4H6" fill="none" stroke="#fff" stroke-width="2.500"/></svg></button>
    <button class="run" aria-label="Chrome"><svg width="34" height="34"><circle cx="17" cy="17" r="16.500" fill="#de5246"/><path d="M17 17L3 8a16.500 16.500 0 0 0 12 25.400z" fill="#1aa260"/><path d="M17 10h15a16.500 16.500 0 0 1-17 23.500L23 20z" fill="#ffce44"/><circle cx="17" cy="17" r="8" fill="#fff"/><circle cx="17" cy="17" r="6" fill="#4285f4"/></svg></button>
    <button aria-label="Control Panel"><svg width="32" height="24"><rect x="1" y="1" width="30" height="21" rx="1" fill="#6cc4f2" stroke="#2a7fc0" stroke-width="1.500"/><circle cx="10" cy="10" r="5.500" fill="#d9f1ff"/><path d="M10 10V4.500A5.500 5.500 0 0 0 4.500 10z" fill="#f5a623"/><path d="M20 6h8v3h-8zM20 12h8v3h-8zM5 18h8M17 18h11" fill="#2f82c4" stroke="#1d6fb5"/></svg></button>
    <button class="run stack" aria-label="Excel"><svg width="32" height="32"><path d="M16 4h15v23H16z" fill="#fff" stroke="#207245" stroke-width="1.500"/><path d="M21 8h8M21 12h8M21 16h8M21 20h8M21 24h8" stroke="#207245" stroke-width="2"/><path d="M0 3l19-3v32L0 29z" fill="#207245"/><path d="M6 10l7 12M13 10L6 22" stroke="#fff" stroke-width="2.500"/></svg></button>
    <button class="run" aria-label="Word"><svg width="32" height="32"><path d="M16 4h15v23H16z" fill="#fff" stroke="#2a5699" stroke-width="1.500"/><path d="M20 8h9M20 12h9M20 16h9M20 20h9M20 24h9" stroke="#2a5699" stroke-width="1.700"/><path d="M0 3l19-3v32L0 29z" fill="#2a5699"/><path d="M4 10l3 12 3-11 3 11 3-12" fill="none" stroke="#fff" stroke-width="2"/></svg></button>
  </div>
  <div class="tray">
    <svg width="18" height="10"><path d="M1 9l8-8 8 8" fill="none" stroke="#fff" stroke-width="1.500"/></svg>
    <svg width="24" height="14" fill="none" stroke="#fff" stroke-width="1.500"><path d="M1 1h20v12H1zM23 4v6"/><path d="M3 3h9v8H3z" fill="#fff" stroke="none"/></svg>
    <svg width="20" height="20" fill="none" stroke="#c9cfd6" stroke-width="1.500"><path d="M1 19Q1 3 18 1M5 19Q6 8 18 6M9 19q1-8 9-8M13 19q1-4 5-4"/><circle cx="17" cy="18" r="1.500" fill="#fff" stroke="none"/></svg>
    <svg width="22" height="18" fill="none" stroke="#fff" stroke-width="1.400"><path d="M1 6h3l6-5v16l-6-5H1zM14 6l6 6M20 6l-6 6"/></svg>
    <span>ENG</span>
    <time>11:52 AM<br>3/23/2021</time>
    <button class="plain notify" aria-label="Notifications"><svg width="24" height="24"><path d="M0 0h24v18H12l-5 5v-5H0z" fill="#fff"/><path d="M4 5h16M4 9h16M4 13h12" stroke="#1c2b40" stroke-width="1.500"/></svg><b>21</b></button>
    <span class="edge"></span>
  </div>
</footer>
</body>
</html>
```
FILE: styles.css
```
*, *::before, *::after { box-sizing: border-box; }
body {
  margin: 0;
  height: 100vh;
  display: flex;
  flex-direction: column;
  overflow: hidden;
  font-family: "Open Sans", "Noto Sans", "DejaVu Sans", sans-serif;
  font-size: 17px;
  color: #323130;
  background: #f3f2f1;
}
svg { display: block; flex: none; overflow: visible; }
.defs { position: absolute; width: 0; height: 0; }
h2, h3, p { margin: 0; }
button, input { font: inherit; color: inherit; }
button { border: 0; background: none; padding: 0; }
input[type="text"] { flex: 1; min-width: 0; border: 0; padding: 0; background: none; outline: 0; }
input::placeholder { color: inherit; opacity: 1; }
.plain { display: flex; align-items: center; justify-content: center; }

.window {
  position: relative;
  flex: 1;
  min-height: 0;
  display: flex;
  flex-direction: column;
  border: 1px solid #6f6e6c;
}

/* title bar */
.titlebar {
  flex: none;
  height: 51px;
  display: flex;
  align-items: center;
  background: #3b3a38;
  color: #fff;
  font-size: 17px;
}
.titlebar-left { flex: none; width: 581px; display: flex; align-items: center; gap: 24px; padding: 4px 0 0 27px; }
.doc-title { margin-left: 95px; line-height: 22px; }
.title-search {
  flex: 0 1 702px;
  height: 36px;
  display: flex;
  align-items: center;
  gap: 17px;
  padding: 0 24px;
  border: 2px solid #dad9d7;
  border-radius: 3px;
  background: #cdccca;
  color: #323130;
  font-size: 20px;
}
.title-search input { color: #243a5e; padding-top: 2px; }
.titlebar-right { margin-left: auto; display: flex; align-items: center; padding-right: 24px; }
.avatar { width: 24px; height: 24px; margin: 0 -3px 0 16px; border-radius: 50%; background: #f3f2f1; }
.titlebar-right .plain { margin-left: 50px; }

/* ribbon */
.tabs { flex: none; height: 56px; display: flex; align-items: center; gap: 47px; padding-left: 33px; font-size: 20px; }
.tab-file { margin-right: 8px; }
.tab { height: 36px; line-height: 28px; padding-bottom: 2px; border-bottom: 5px solid transparent; }
.tab.active { border-color: #f2c811; font-weight: 600; color: #252423; }
.ribbon {
  flex: none;
  height: 61px;
  display: flex;
  align-items: center;
  padding: 0 8px 0 30px;
  border-bottom: 3px solid #e6e5e5;
  font-size: 19px;
  color: #252423;
}
.tool { display: flex; align-items: center; }
.chev { margin-left: 6px; }
.muted { color: #b3b0ad; }
.brush { margin-left: 23px; }
.sep { width: 1px; height: 48px; background: #c8c6c4; }
.brush + .sep { margin-left: 21px; }
.getdata { margin: 0 8px 0 25px; }
.getdata span { margin: 0 5px 0 14px; }
.tool.icon { width: 60px; justify-content: center; }
.recent { margin: 0 11px 0 16px; }
.transform { margin-left: 22px; }
.refresh { margin-left: 22px; }
.spacer { flex: 1; }
.sensitivity { margin-right: 12px; font-size: 20px; }
.sensitivity .chev { margin-left: 10px; }
.publish { gap: 15px; margin: 0 25px; }
.collapse { align-self: flex-end; margin: 0 0 7px 115px; }

/* workspace */
.workspace { flex: 1; min-height: 0; display: grid; grid-template-columns: 62px minmax(0, 1fr) 272px 270px; border-bottom: 2px solid #e1dfdd; }
.rail { border-right: 2px solid #e1dfdd; display: flex; flex-direction: column; }
.rail button { height: 59px; border-left: 5px solid transparent; padding-right: 2px; }
.rail .on { height: 60px; border-color: #f2c811; }
.report { display: grid; grid-template: minmax(0, 1fr) 52px / minmax(0, 1fr) 49px; min-height: 0; }
.canvas { background: #fff; padding: 0 0 49px 4px; min-height: 0; }
.page { height: 100%; border-right: 1px dashed #484644; border-bottom: 3px dotted #484644; overflow: hidden; }
.filters { background: #fff; border-left: 2px solid #b3b0ad; display: flex; flex-direction: column; align-items: center; padding: 24px 2px 0 0; }
.filters h2 { writing-mode: vertical-rl; font-size: 22px; line-height: 28px; font-weight: 600; color: #252423; margin-top: 17px; }
.funnel { margin: 52px 0 0 5px; }

.grid path { fill: none; stroke: #c0bebc; stroke-width: 1; stroke-dasharray: 1 5; }
.tick, .cat { font-size: 12px; fill: #666; }
.note { font-size: 13px; font-weight: 700; fill: #605e5c; }
.axis { font-size: 13px; fill: #252423; }

.pages { grid-column: 1 / 3; display: flex; background: #f3f2f1; }
.pager { width: 60px; display: flex; justify-content: space-between; padding: 0 9px 0 8px; border-right: 2px solid #a19f9d; }
.pg { border-right: 2px solid #c8c6c4; }
.cover { width: 107px; }
.wide { width: 113px; }
.narrow { width: 102px; }
.mid { width: 108px; }
.current { width: 93px; background: #fff; font-weight: 600; border-bottom: 6px solid #f2c811; border-right-width: 1px; padding-top: 6px; }
.add { width: 59px; margin: 2px 0; background: #f2c811; display: flex; align-items: center; justify-content: center; }

/* side panes */
.pane { border-left: 2px solid #e1dfdd; display: flex; flex-direction: column; min-height: 0; min-width: 0; }
.pane header { flex: none; height: 78px; display: flex; align-items: center; justify-content: space-between; padding: 0 18px; }
.pane header .plain { padding-bottom: 10px; }
.pane h2 { font-size: 22px; line-height: 30px; padding-bottom: 5px; font-weight: 600; color: #484644; }
.gallery { flex: none; display: grid; grid-template-columns: repeat(6, 42px); grid-auto-rows: 36px; padding: 3px 0 5px 14px; }
.gallery button { display: flex; align-items: flex-start; }
.gallery svg { width: 25px; height: 25px; }
.gallery.custom { border-top: 2px dashed #e1dfdd; border-bottom: 2px solid #e1dfdd; padding: 7px 0 2px 12px; }
.gallery.custom svg { width: 30px; height: 30px; }
.w { fill: #fafafa; stroke: #3b3a39; stroke-width: 1.5px; }
.b { fill: #83beec; stroke: #106ebe; stroke-width: 1.5px; }
.g { fill: #c8c6c4; stroke: #8a8886; stroke-width: 1.3px; }
.k { fill: none; stroke: #3b3a39; stroke-width: 2px; }
.k.thin { stroke-width: 1.5px; }
.bl { fill: none; stroke: #2a86c8; stroke-width: 2px; }
.well-tabs { flex: none; display: flex; padding: 11px 18px 0; }
.well-tabs button { width: 60px; height: 42px; align-items: flex-start; border-bottom: 6px solid transparent; }
.well-tabs .on { border-color: #f2c811; border-radius: 3px; }
.wells { flex: 1; min-height: 0; display: flex; }
.well-body { flex: 1; min-width: 0; overflow: hidden; line-height: 24px; padding: 8px 0 0 6px; }
.values { padding-left: 12px; }
.drop { height: 42px; margin-top: 8px; padding: 8px 14px; border: 2px dashed #d2d0ce; background: #fff; white-space: nowrap; }
.well-body h3 { font-size: 22px; line-height: 30px; font-weight: 600; color: #484644; padding-left: 14px; margin: 21px 0 23px; }
.well-body label { display: block; padding-left: 7px; }
.switch-row { display: flex; align-items: center; gap: 6px; padding-left: 20px; margin: 19px 0; }
.switch-row + label { margin-top: 29px; }
.drop.last { padding-left: 11px; }
.switch-row span { width: 24px; }
.switch { appearance: none; width: 45px; height: 18px; margin: 0; display: flex; align-items: center; }
.switch::before { content: ""; width: 18px; height: 18px; border: 3px solid #605e5c; border-radius: 50%; }
.switch::after { content: ""; flex: 1; height: 3px; background: #605e5c; }
.switch:checked { flex-direction: row-reverse; }
.switch:checked::before { background: #605e5c; }
.bar { flex: none; width: 9px; background: #d2d0ce; border-radius: 4px; }
.wells .bar { margin-bottom: 18px; }

.field-search { flex: none; height: 44px; margin: 0 5px 7px; display: flex; align-items: center; gap: 13px; padding: 0 16px; border: 2px solid #c8c6c4; border-radius: 3px; background: #fff; font-size: 18px; color: #252423; }
.tree { flex: 1; min-height: 0; display: flex; border-top: 2px solid #e1dfdd; }
.tree-body { flex: 1; min-width: 0; overflow: hidden; padding-top: 10px; }
.entity { display: flex; align-items: center; width: 100%; height: 41px; padding-left: 5px; gap: 10px; }
.entity span { margin-left: 9px; white-space: nowrap; }
.tw { color: #605e5c; }
.open .tw { transform: rotate(180deg); }
.cols { padding: 7px 0 3px 47px; }
.cols label { height: 36px; display: flex; align-items: center; }
.cols input { appearance: none; flex: none; width: 18px; height: 18px; margin: 0 7px 0 0; border: 2px solid #797775; border-radius: 3px; }
.cols i { width: 31px; }
.tree .bar { width: 8px; margin: 101px 0 109px; }

.status { flex: none; height: 33px; padding-left: 7px; line-height: 33px; color: #484644; }

.tooltip {
  position: absolute;
  top: 87px;
  right: 533px;
  width: 606px;
  height: 84px;
  padding: 19px 40px 17px 18px;
  background: #fff;
  box-shadow: 0 0 20px rgba(0, 0, 0, .18);
  font-size: 17px;
  line-height: 24px;
  font-weight: 700;
  color: #484644;
}
.tooltip::after { content: ""; position: absolute; top: 84px; right: 22px; border: 9px solid transparent; border-top-color: #fff; border-bottom: 0; }

/* taskbar */
.taskbar { flex: none; height: 60px; display: flex; background: linear-gradient(90deg, #20373f, #20333f 60%, #1b2944 85%); color: #fff; }
.start { width: 72px; display: flex; align-items: center; justify-content: center; }
.win-search { flex: 0 1 516px; display: flex; align-items: center; gap: 18px; padding: 0 16px; border: 2px solid #c0c0c0; background: #f2f2f2; color: #1f1f1f; font-size: 21px; }
.win-search input { padding-top: 2px; }
.sys { display: flex; margin-right: 4px; }
.sys button { width: 72px; }
.apps { display: flex; gap: 2px; }
.apps button { width: 73px; display: flex; align-items: center; justify-content: center; background-repeat: no-repeat; background-position: center bottom; }
.run { background-image: linear-gradient(#76b9ed, #76b9ed); background-size: 61px 3px; }
.focus { background-color: #4c5b64; background-size: 100% 3px; }
.stack { background-image: linear-gradient(90deg, #76b9ed 48px, #5c8fbd 48px); }
.tray { margin-left: auto; display: flex; align-items: center; gap: 15px; font-size: 17px; }
.tray time { font-size: 18px; line-height: 28px; text-align: center; margin: 0 8px 0 4px; }
.notify { position: relative; margin: 0 16px 0 5px; }
.notify b { position: absolute; left: 8px; top: 10px; width: 28px; height: 28px; border-radius: 50%; border: 1px solid #8a8886; background: #33383f; font-size: 16px; line-height: 26px; font-weight: 600; }
.edge { width: 7px; height: 60px; border-left: 1px solid #8a8f99; }
```
